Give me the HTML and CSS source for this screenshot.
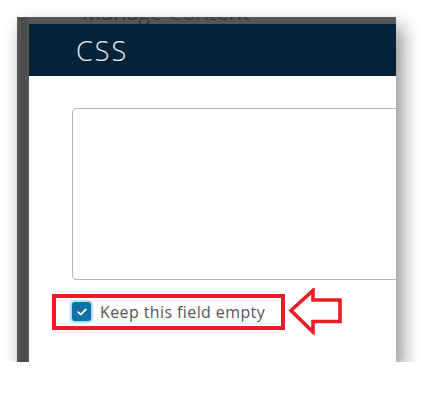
FILE: index.html
```html
<!DOCTYPE html>
<html>
<head>
<meta charset="utf-8">
<link rel="stylesheet" href="styles.css">
</head>
<body>
<div class="page">
  <div class="frame">
    <div class="side"></div>
    <div class="main">
      <div class="topstrip"><span class="behind">Manage Content</span></div>
      <div class="header"><span class="title">CSS</span></div>
      <div class="content">
        <div class="field"></div>
        <div class="row">
          <div class="highlight">
            <span class="checkbox">
              <svg width="10" height="8" viewBox="0 0 10 8"><path d="M1.2 4.2 L3.8 6.6 L8.8 1.4" fill="none" stroke="#fff" stroke-width="1.8" stroke-linecap="round" stroke-linejoin="round"/></svg>
            </span>
            <span class="label">Keep this field empty</span>
          </div>
          <svg class="arrow" width="56" height="47" viewBox="0 0 56 47">
            <polygon points="3,22.5 25,2.5 25,12 52,12 52,33.5 25,33.5 25,44" fill="none" stroke="#ed1c24" stroke-width="3.6" stroke-linejoin="miter"/>
          </svg>
        </div>
      </div>
    </div>
  </div>
</div>
</body>
</html>
```
FILE: styles.css
```css
html, body {
  margin: 0;
  padding: 0;
  background: #ffffff;
}
.page {
  padding: 17px 0 0 17px;
}
.frame {
  width: 379px;
  height: 345px;
  display: flex;
  overflow: hidden;
  background: #fff;
  box-shadow: 6px 10px 18px rgba(0, 0, 0, 0.45);
}
.side {
  width: 12px;
  flex: none;
  background: linear-gradient(90deg, #575757 0, #4a4a4a 55%, #555 100%);
}
.main {
  flex: 1;
  display: flex;
  flex-direction: column;
  min-width: 0;
}
.topstrip {
  height: 7px;
  background: #565656;
  overflow: hidden;
  position: relative;
}
.behind {
  position: absolute;
  left: 53px;
  top: -19px;
  font-family: "Open Sans", sans-serif;
  font-weight: 300;
  font-size: 22px;
  line-height: 26px;
  color: #2c2c2c;
  white-space: nowrap;
  letter-spacing: 0.3px;
}
.header {
  height: 52px;
  background: #03233a;
  display: flex;
  align-items: center;
  padding-left: 47px;
}
.title {
  font-family: "Open Sans", sans-serif;
  font-weight: 300;
  font-size: 27px;
  color: #ececec;
  letter-spacing: 2px;
}
.content {
  flex: 1;
  padding: 32px 0 0 43px;
}
.field {
  width: 360px;
  height: 170px;
  border: 1px solid #b4b4b4;
  border-radius: 4px;
}
.row {
  display: flex;
  align-items: center;
  margin: 8px 0 0 -20px;
}
.highlight {
  display: flex;
  align-items: center;
  border: 4px solid #ed1c24;
  height: 28px;
  padding: 0 16px 0 16px;
}
.checkbox {
  width: 19px;
  height: 19px;
  border-radius: 3px;
  background: #0f71a6;
  box-shadow: 0 0 2px 2px rgba(110, 175, 230, 0.55);
  display: flex;
  align-items: center;
  justify-content: center;
  flex: none;
}
.label {
  margin-left: 9px;
  font-family: "Open Sans", sans-serif;
  font-size: 16px;
  color: #555;
  letter-spacing: 0.4px;
}
.arrow {
  margin-left: 3px;
  flex: none;
}
```
